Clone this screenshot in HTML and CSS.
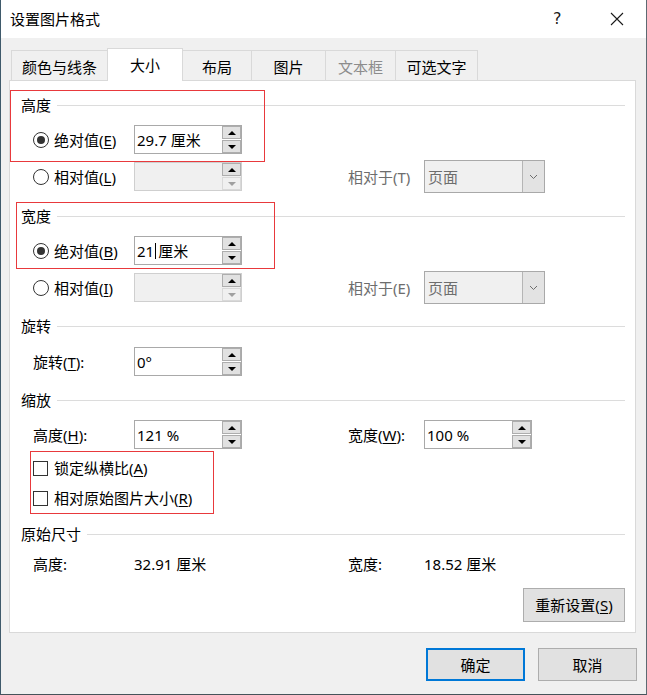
FILE: index.html
```html
<!DOCTYPE html>
<html lang="zh-CN">
<head>
<meta charset="utf-8">
<title>设置图片格式</title>
<link rel="stylesheet" href="styles.css">
</head>
<body>
<div class="window">
  <div class="titlebar">
    <span class="title">设置图片格式</span>
    <span class="help">?</span>
    <span class="close"><svg width="14" height="14" viewBox="0 0 14 14"><path d="M1 1L13 13M13 1L1 13" stroke="#1a1a1a" stroke-width="1.1" fill="none"/></svg></span>
  </div>
  <div class="body">
    <div class="tabs">
      <div class="tab t1">颜色与线条</div>
      <div class="tab t2 active">大小</div>
      <div class="tab t3">布局</div>
      <div class="tab t4">图片</div>
      <div class="tab t5 disabled">文本框</div>
      <div class="tab t6">可选文字</div>
    </div>
    <div class="panel">
      <div class="heading first"><span>高度</span><i class="rule"></i></div>
      <div class="row gap-h">
        <div class="lbl"><span class="radio on"></span>绝对值(<u>E</u>)</div>
        <div class="spin"><span class="val">29.7 厘米</span><span class="btns"><b class="sb"><i class="up"></i></b><b class="sb"><i class="down"></i></b></span></div>
      </div>
      <div class="row tall gap-s">
        <div class="lbl"><span class="radio"></span>相对值(<u>L</u>)</div>
        <div class="spin off"><span class="val"></span><span class="btns"><b class="sb"><i class="up"></i></b><b class="sb dis"><i class="down"></i></b></span></div>
        <div class="rlbl dim">相对于(T)</div>
        <div class="select"><span class="sel-text">页面</span><span class="drop"><svg width="9" height="6" viewBox="0 0 9 6"><path d="M1 1L4.5 4.5L8 1" stroke="#6d6d6d" stroke-width="1" fill="none"/></svg></span></div>
      </div>

      <div class="heading gap-l"><span>宽度</span><i class="rule"></i></div>
      <div class="row gap-h">
        <div class="lbl"><span class="radio on"></span>绝对值(<u>B</u>)</div>
        <div class="spin"><span class="val">21<span class="caret"></span>厘米</span><span class="btns"><b class="sb"><i class="up"></i></b><b class="sb"><i class="down"></i></b></span></div>
      </div>
      <div class="row tall gap-s">
        <div class="lbl"><span class="radio"></span>相对值(<u>I</u>)</div>
        <div class="spin off"><span class="val"></span><span class="btns"><b class="sb"><i class="up"></i></b><b class="sb dis"><i class="down"></i></b></span></div>
        <div class="rlbl dim">相对于(E)</div>
        <div class="select"><span class="sel-text">页面</span><span class="drop"><svg width="9" height="6" viewBox="0 0 9 6"><path d="M1 1L4.5 4.5L8 1" stroke="#6d6d6d" stroke-width="1" fill="none"/></svg></span></div>
      </div>

      <div class="heading gap-m"><span>旋转</span><i class="rule"></i></div>
      <div class="row gap-r">
        <div class="lbl">旋转(<u>T</u>):</div>
        <div class="spin"><span class="val">0°</span><span class="btns"><b class="sb"><i class="up"></i></b><b class="sb"><i class="down"></i></b></span></div>
      </div>

      <div class="heading gap-x"><span>缩放</span><i class="rule"></i></div>
      <div class="row gap-h">
        <div class="lbl">高度(<u>H</u>):</div>
        <div class="spin"><span class="val">121 %</span><span class="btns"><b class="sb"><i class="up"></i></b><b class="sb"><i class="down"></i></b></span></div>
        <div class="rlbl">宽度(<u>W</u>):</div>
        <div class="spin"><span class="val">100 %</span><span class="btns"><b class="sb"><i class="up"></i></b><b class="sb"><i class="down"></i></b></span></div>
      </div>
      <div class="row check gap-c">
        <span class="box"></span>锁定纵横比(<u>A</u>)
      </div>
      <div class="row check">
        <span class="box"></span>相对原始图片大小(<u>R</u>)
      </div>

      <div class="heading gap-r"><span>原始尺寸</span><i class="rule"></i></div>
      <div class="row info gap-h">
        <div class="lbl">高度:</div>
        <div class="vcol">32.91 厘米</div>
        <div class="rlbl">宽度:</div>
        <div class="vcol">18.52 厘米</div>
      </div>
      <div class="reset-row">
        <button class="btn reset">重新设置(<u>S</u>)</button>
      </div>
    </div>
    <div class="footer">
      <button class="btn primary">确定</button>
      <button class="btn">取消</button>
    </div>
  </div>
  <div class="mark m1"></div>
  <div class="mark m2"></div>
  <div class="mark m3"></div>
</div>
</body>
</html>
```
FILE: styles.css
```css
* { box-sizing: border-box; }
html, body { margin: 0; padding: 0; background: #f0f0f0; }
body {
  font-family: "Noto Sans", "Noto Sans CJK SC", sans-serif;
  font-size: 15px;
  color: #000;
}
.window {
  position: relative;
  width: 647px;
  height: 695px;
  display: flex;
  flex-direction: column;
  background: #f0f0f0;
  border-left: 1px solid #3f5a6b;
  border-right: 1px solid #5d6a72;
  border-bottom: 1px solid #46535a;
}
.titlebar {
  height: 38px;
  background: #fff;
  display: flex;
  align-items: center;
  padding-left: 9px;
  flex-shrink: 0;
}
.title { font-size: 15px; line-height: 20px; }
.help {
  margin-left: auto;
  font-family: "DejaVu Sans", sans-serif;
  font-size: 16px;
  line-height: 20px;
  width: 10px;
  margin-right: 47px;
  color: #1a1a1a;
}
.close { width: 14px; height: 14px; margin-right: 22px; display: flex; }
.body {
  flex: 1;
  padding: 10px 10px 0 8px;
  display: flex;
  flex-direction: column;
}
.tabs {
  display: flex;
  align-items: flex-end;
  height: 32px;
  padding-left: 2px;
  position: relative;
  z-index: 1;
}
.tab {
  height: 30px;
  border: 1px solid #d9d9d9;
  border-bottom: none;
  margin-left: -1px;
  display: flex;
  align-items: center;
  justify-content: center;
  padding-top: 2px;
  line-height: 20px;
  background: #f0f0f0;
}
.tab.t1 { margin-left: 0; width: 97px; }
.tab.t2 { width: 76px; }
.tab.t3 { width: 70px; }
.tab.t4 { width: 75px; }
.tab.t5 { width: 71px; }
.tab.t6 { width: 83px; }
.tab.active {
  height: 33px;
  margin-bottom: -1px;
  background: #fff;
  position: relative;
  z-index: 2;
  padding-top: 0;
}
.tab.disabled { color: #8c8c8c; }
.panel {
  background: #fff;
  border: 1px solid #d9d9d9;
  padding: 14px 10px 10px 11px;
  display: flex;
  flex-direction: column;
}
.heading {
  display: flex;
  align-items: center;
  height: 20px;
  line-height: 20px;
}
.rule { flex: 1; height: 1px; background: #dcdcdc; margin-left: 6px; margin-top: 1px; }
.gap-l { margin-top: 13px; }
.gap-m { margin-top: 12px; }
.gap-x { margin-top: 14px; }
.gap-r { margin-top: 11px; }
.gap-h { margin-top: 10px; }
.gap-s { margin-top: 6px; }
.gap-c { margin-top: 4px; }
.row {
  display: flex;
  align-items: center;
  height: 29px;
  margin-left: 12px;
  line-height: 20px;
  flex-shrink: 0;
}
.row.tall { height: 33px; }
.row.check { height: 30px; }
.row.info { height: 20px; }
.lbl {
  width: 101px;
  display: flex;
  align-items: center;
}
.radio {
  width: 16px;
  height: 16px;
  border: 1px solid #333;
  border-radius: 50%;
  margin-right: 5px;
  display: flex;
  align-items: center;
  justify-content: center;
  flex-shrink: 0;
}
.radio.on::after {
  content: "";
  width: 8px;
  height: 8px;
  border-radius: 50%;
  background: #333;
}
.box {
  width: 15px;
  height: 15px;
  border: 1px solid #333;
  margin-right: 6px;
  flex-shrink: 0;
}
u { text-decoration: underline; text-underline-offset: 2px; }
.spin {
  width: 108px;
  height: 29px;
  border: 1px solid #a9a9a9;
  background: #fff;
  display: flex;
}
.spin.off { background: #f0f0f0; border-color: #cfcfcf; }
.val {
  flex: 1;
  padding-left: 2px;
  display: flex;
  align-items: center;
  white-space: pre;
}
.caret {
  display: inline-block;
  width: 1px;
  height: 16px;
  background: #000;
  margin: 0 2px 0 1px;
}
.btns {
  width: 19px;
  display: flex;
  flex-direction: column;
  gap: 1px;
}
.sb {
  flex: 1;
  background: #e1e1e1;
  border: 1px solid #adadad;
  display: flex;
  align-items: center;
  justify-content: center;
}
.sb.dis { background: #f0f0f0; border-color: #d9d9d9; }
.up, .down { width: 0; height: 0; border-left: 4px solid transparent; border-right: 4px solid transparent; }
.up { border-bottom: 4px solid #000; }
.down { border-top: 4px solid #000; }
.sb.dis .down { border-top-color: #a0a0a0; }
.rlbl { width: 76px; margin-left: 106px; }
.dim { color: #6d6d6d; }
.select {
  width: 121px;
  height: 33px;
  border: 1px solid #a9a9a9;
  background: #f0f0f0;
  display: flex;
  color: #6d6d6d;
}
.sel-text { flex: 1; padding-left: 3px; display: flex; align-items: center; }
.drop {
  width: 22px;
  border-left: 1px solid #b5b5b5;
  background: #e3e3e3;
  display: flex;
  align-items: center;
  justify-content: center;
}
.vcol { width: 108px; }
.reset-row {
  display: flex;
  justify-content: flex-end;
  margin-top: 14px;
}
.btn {
  font-family: inherit;
  font-size: 15px;
  color: #000;
  background: #e1e1e1;
  border: 1px solid #adadad;
  padding: 0;
  line-height: 20px;
}
.reset { width: 102px; height: 34px; }
.footer {
  display: flex;
  justify-content: flex-end;
  gap: 13px;
  margin-top: 15px;
  margin-right: -1px;
}
.footer .btn { width: 99px; height: 33px; }
.btn.primary { border: 2px solid #0078d7; }
.mark { position: absolute; border: 1px solid #e8393c; pointer-events: none; }
.m1 { left: 9px; top: 90px; width: 255px; height: 72px; }
.m2 { left: 15px; top: 202px; width: 259px; height: 67px; }
.m3 { left: 29px; top: 451px; width: 184px; height: 63px; }
```
